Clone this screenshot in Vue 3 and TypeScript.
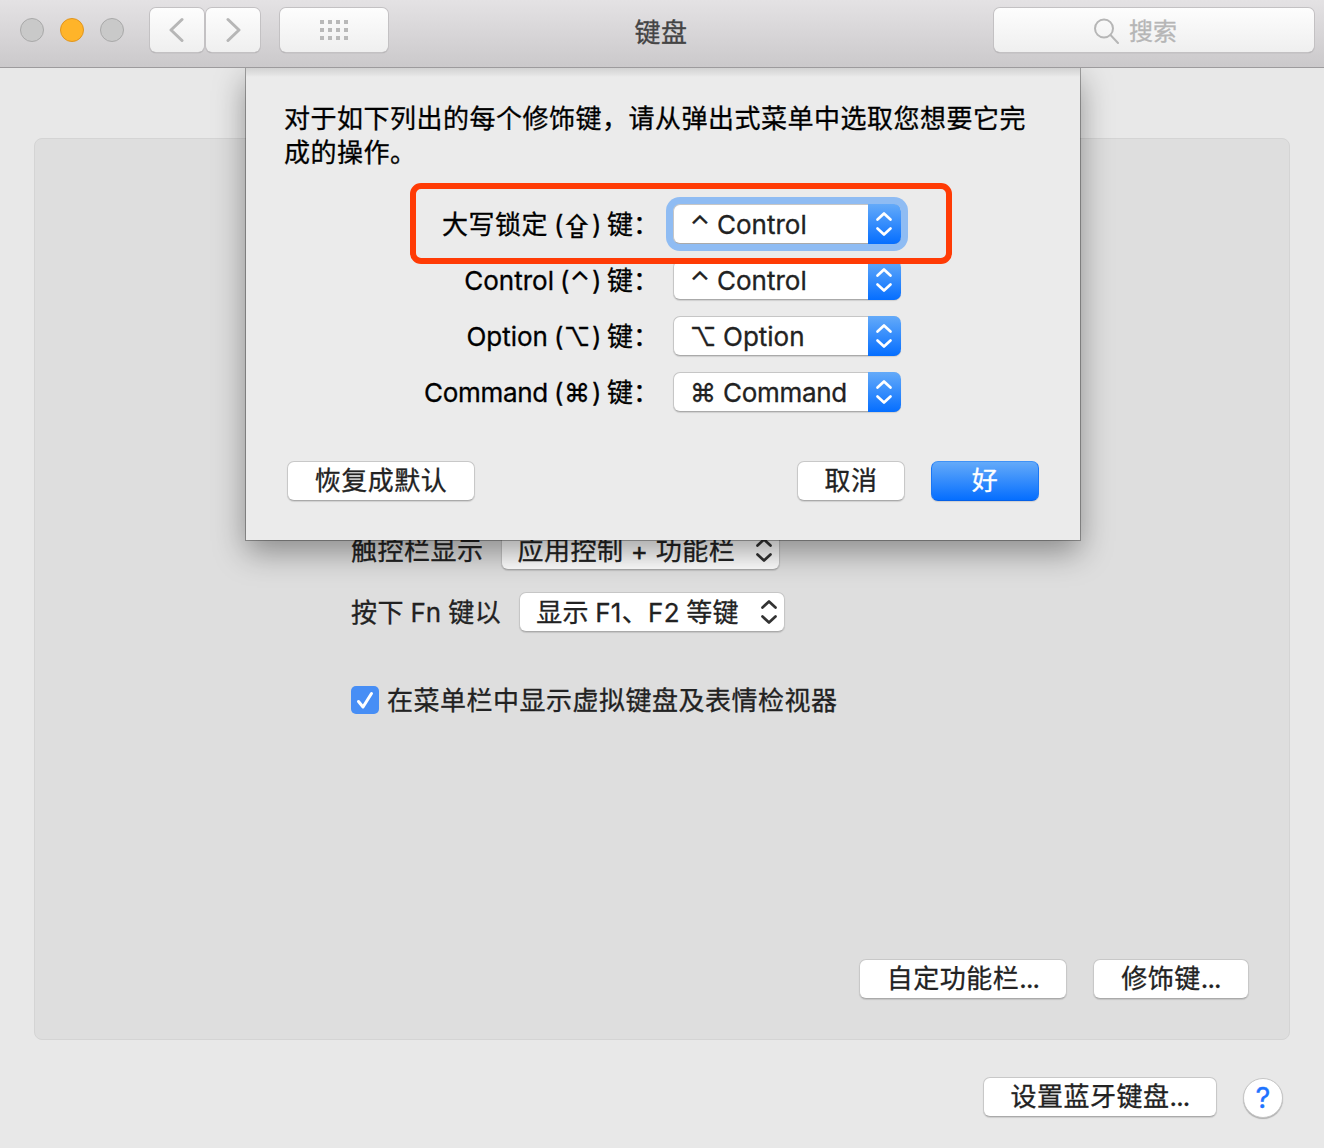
<template>
  <div class="window">
    <header class="toolbar">
      <div class="lights">
        <span class="light"></span>
        <span class="light minimize"></span>
        <span class="light"></span>
      </div>
      <div class="nav">
        <button class="tool nav-button" aria-label="back">
          <svg width="16" height="26" viewBox="0 0 16 26"><path d="M13 2.500 2 13l11 10.500" /></svg>
        </button>
        <button class="tool nav-button" aria-label="forward">
          <svg width="16" height="26" viewBox="0 0 16 26"><path d="M3 2.500 14 13 3 23.500" /></svg>
        </button>
      </div>
      <button class="tool grid-button" aria-label="all">
        <span class="dots"><i v-for="n in 12" :key="n"></i></span>
      </button>
      <h1 class="title">键盘</h1>
      <div class="tool search">
        <svg width="26" height="26" viewBox="0 0 26 26">
          <circle cx="11" cy="10.500" r="9" />
          <path d="M17.500 17l7.500 8" />
        </svg>
        <span>搜索</span>
      </div>
    </header>

    <main class="panel">
      <div class="setting">
        <span class="setting-label">触控栏显示</span>
        <div class="popup plain touchbar">
          <span class="value">应用控制 + 功能栏</span>
          <svg class="arrows" width="18" height="26" viewBox="0 0 18 26"><path d="M2.500 8.500 9 2.500l6.500 6M2.500 17.500l6.500 6 6.500-6" /></svg>
        </div>
      </div>
      <div class="setting">
        <span class="setting-label">按下 Fn 键以</span>
        <div class="popup plain fn">
          <span class="value">显示 F1、F2 等键</span>
          <svg class="arrows" width="18" height="26" viewBox="0 0 18 26"><path d="M2.500 8.500 9 2.500l6.500 6M2.500 17.500l6.500 6 6.500-6" /></svg>
        </div>
      </div>
      <label class="check-row">
        <span class="checkbox">
          <svg width="28" height="28" viewBox="0 0 28 28"><path d="M7.500 15.500 12 21 20.500 7.500" /></svg>
        </span>
        <span class="check-text">在菜单栏中显示虚拟键盘及表情检视器</span>
      </label>
      <div class="panel-actions">
        <button class="button customize">自定功能栏<span class="dots-text">...</span></button>
        <button class="button modifiers">修饰键<span class="dots-text">...</span></button>
      </div>
    </main>

    <footer class="footer">
      <button class="button bluetooth">设置蓝牙键盘<span class="dots-text">...</span></button>
      <button class="help">?</button>
    </footer>

    <section class="sheet">
      <p class="message">对于如下列出的每个修饰键，请从弹出式菜单中选取您想要它完成的操作。</p>
      <div class="rows">
        <div v-for="row in rows" :key="row.name" class="row">
          <div class="key-label">
            <span :class="[row.kind, { latin: row.latin }]">{{ row.name }}</span>
            <span class="paren open">(</span>
            <span class="symbol" :class="row.kind">{{ row.symbol }}</span>
            <span class="paren">)</span>
            <span class="suffix">键<span class="colon">：</span></span>
          </div>
          <div class="popup" :class="{ focused: row.focused }">
            <span class="symbol value-symbol" :class="row.kind === 'caps' ? 'control' : row.kind">{{ row.valueSymbol }}</span>
            <span class="latin value-text" :class="row.kind">{{ row.value }}</span>
            <span class="stepper">
              <svg class="arrows" width="18" height="26" viewBox="0 0 18 26"><path d="M2.500 8.500 9 2.500l6.500 6M2.500 17.500l6.500 6 6.500-6" /></svg>
            </span>
          </div>
        </div>
      </div>
      <div class="sheet-actions">
        <button class="button restore">恢复成默认</button>
        <button class="button cancel">取消</button>
        <button class="button primary">好</button>
      </div>
    </section>
    <div class="highlight"></div>
  </div>
</template>

<script setup lang="ts">
interface ModifierRow {
  name: string
  latin: boolean
  symbol: string
  kind: string
  value: string
  valueSymbol: string
  focused: boolean
}

const rows: ModifierRow[] = [
  { name: '大写锁定', latin: false, symbol: '⇪', kind: 'caps', value: 'Control', valueSymbol: '⌃', focused: true },
  { name: 'Control', latin: true, symbol: '⌃', kind: 'control', value: 'Control', valueSymbol: '⌃', focused: false },
  { name: 'Option', latin: true, symbol: '⌥', kind: 'option', value: 'Option', valueSymbol: '⌥', focused: false },
  { name: 'Command', latin: true, symbol: '⌘', kind: 'command', value: 'Command', valueSymbol: '⌘', focused: false },
]
</script>

<style>
body {
  background: #e8e8e8;
}
</style>

<style scoped>
.window {
  position: relative;
  box-sizing: border-box;
  width: 1324px;
  height: 1148px;
  overflow: hidden;
  background: #e8e8e8;
  color: #222;
  font-family: Inter, 'Noto Sans CJK SC', sans-serif;
  font-size: 26px;
  letter-spacing: 0.5px;
  line-height: 38px;
  white-space: nowrap;
  -webkit-text-stroke: 0.3px;
}

.window *,
.window *::before {
  box-sizing: border-box;
}

button {
  margin: 0;
  padding: 0;
  border: none;
  color: inherit;
  font: inherit;
  letter-spacing: inherit;
}

svg {
  display: block;
  fill: none;
  stroke: currentColor;
  stroke-width: 3;
  stroke-linecap: round;
  stroke-linejoin: round;
}

.arrows {
  stroke-width: 2.7;
}

.toolbar {
  display: flex;
  align-items: flex-start;
  height: 68px;
  padding: 8px 10px 0 20px;
  background: linear-gradient(#e4e2e4, #cbc9cb);
  border-bottom: 1px solid #9d9b9d;
}

.lights {
  display: flex;
  gap: 16px;
  width: 130px;
  padding-top: 10px;
}

.light {
  width: 24px;
  height: 24px;
  border: 1px solid #a9a9a9;
  border-radius: 50%;
  background: #c9c9c9;
}

.light.minimize {
  background: #ffb429;
  border-color: #e0951f;
}

.tool {
  display: flex;
  align-items: center;
  justify-content: center;
  height: 44px;
  border-radius: 6px;
  background: linear-gradient(#fdfdfd, #efefef);
  box-shadow: 0 0 0 1px #c3c1c3, 0 1px 1px 0 #858385;
  color: #b6b6b6;
}

.nav {
  display: flex;
  gap: 2px;
}

.nav-button {
  width: 54px;
}

.grid-button {
  width: 108px;
  margin-left: 20px;
}

.dots {
  display: grid;
  grid-template-columns: repeat(4, 4px);
  gap: 4px;
}

.dots i {
  width: 4px;
  height: 4px;
  background: #b9b9b9;
}

.title {
  width: 546px;
  margin: 6px 0 0;
  color: #444;
  font-size: 26px;
  font-weight: 400;
  text-align: center;
}

.search {
  width: 320px;
  margin-left: auto;
  gap: 10px;
  padding: 2px 137px 0 0;
  font-size: 24px;
  letter-spacing: 0;
  justify-content: flex-end;
}

.search span {
  padding-top: 2px;
}

.search svg {
  stroke-width: 2;
}

.panel {
  display: flex;
  flex-direction: column;
  width: 1256px;
  height: 902px;
  margin: 70px 0 0 34px;
  padding: 391px 40px 40px 316px;
  border: 1px solid #d4d4d4;
  border-radius: 8px;
  background: #dedede;
}

.setting {
  display: flex;
  align-items: center;
  height: 40px;
  margin-bottom: 22px;
}

.setting-label {
  padding-top: 2px;
  word-spacing: -1.2px;
}

.popup {
  display: flex;
  align-items: center;
  width: 228px;
  height: 40px;
  border: 1px solid #c6c6c6;
  border-bottom-color: #aaa;
  border-radius: 7px;
  background: #fff;
  box-shadow: 0 1px 1px rgba(0, 0, 0, 0.12);
}

.popup.plain {
  justify-content: space-between;
  margin-left: 17px;
  padding: 0 6px 0 16px;
}

.value {
  padding-top: 2px;
  word-spacing: -0.6px;
}

.touchbar {
  width: 279px;
}

.popup.fn {
  width: 266px;
  margin-left: 18px;
}

.fn .value {
  letter-spacing: 0.3px;
  word-spacing: -1.2px;
}

.plain .arrows {
  color: #333;
}

.check-row {
  display: flex;
  align-items: center;
  gap: 8px;
  height: 40px;
  margin-top: 26px;
}

.check-text {
  padding-top: 2px;
}

.checkbox {
  width: 28px;
  height: 28px;
  border-radius: 5px;
  background: #478ef5;
  color: #fff;
}

.panel-actions {
  display: flex;
  justify-content: flex-end;
  gap: 26px;
  margin-top: auto;
}

.button {
  height: 40px;
  border: 1px solid #c8c8c8;
  border-bottom-color: #aaa;
  border-radius: 7px;
  background: #fff;
  box-shadow: 0 1px 1px rgba(0, 0, 0, 0.12);
  text-align: center;
}

.dots-text {
  letter-spacing: -0.8px;
}

.customize {
  width: 208px;
}

.modifiers {
  width: 156px;
}

.footer {
  display: flex;
  justify-content: flex-end;
  gap: 26px;
  padding: 37px 41px 0 0;
}

.bluetooth {
  width: 234px;
}

.help {
  width: 40px;
  height: 40px;
  margin-top: 1px;
  border: 1px solid #c6c6c6;
  border-radius: 50%;
  background: #fff;
  box-shadow: 0 1px 1px rgba(0, 0, 0, 0.25);
  color: #1e73ff;
  font-size: 29px;
  letter-spacing: 0;
}

.sheet {
  position: absolute;
  top: 68px;
  left: 246px;
  width: 834px;
  height: 472px;
  padding: 34px 41px 0;
  background: linear-gradient(#d2d2d2, #e4e4e4 7px, #ebebeb 9px);
  box-shadow: 0 0 0 1px rgba(0, 0, 0, 0.3), 0 12px 30px rgba(0, 0, 0, 0.38);
  clip-path: inset(0 -60px -80px -60px);
  color: #000;
}

.message {
  width: 750px;
  height: 68px;
  margin: 0 0 0 -3px;
  line-height: 34px;
  white-space: normal;
  word-break: break-all;
}

.rows {
  display: flex;
  flex-direction: column;
  gap: 16px;
  margin-top: 34px;
}

.row {
  display: flex;
  align-items: center;
  gap: 13px;
}

.key-label {
  display: flex;
  align-items: center;
  justify-content: flex-end;
  width: 373px;
  padding-top: 2px;
}

.latin {
  letter-spacing: 0;
}

.latin.command {
  letter-spacing: -0.3px;
}

.paren {
  width: 9px;
  letter-spacing: 0;
}

.open {
  width: 10px;
  margin-left: 6px;
}

.suffix {
  margin-left: 6px;
}

.colon {
  margin: 0 0.5px 0 -0.5px;
}

.symbol {
  width: 28px;
  letter-spacing: 0;
  text-align: center;
}

.symbol.control {
  width: 22px;
}

.key-label .symbol {
  margin: 0 1px 0 -1px;
}

.rows .popup {
  color: #222;
  padding-left: 15px;
  border-right: none;
}

.value-symbol {
  margin-right: 6px;
  padding-top: 2px;
}

.value-text {
  padding-top: 2px;
}

.popup.focused {
  box-shadow: 0 0 0 7px #8fbcf3;
}

.stepper {
  display: flex;
  align-items: center;
  justify-content: center;
  width: 33px;
  height: 40px;
  margin-left: auto;
  padding-right: 1px;
  border-radius: 0 7px 7px 0;
  background: linear-gradient(#64aaf9, #056eff);
  color: #fff;
}

.sheet-actions {
  display: flex;
  margin-top: 49px;
}

.restore {
  width: 188px;
}

.cancel {
  width: 108px;
  margin-left: auto;
  margin-right: 26px;
}

.restore,
.cancel {
  color: #222;
}

.primary {
  width: 108px;
  border-color: #3f92f6 #1a77f5 #0560e6;
  background: linear-gradient(#64aaf9, #056eff);
  color: #fff;
}

/* annotation frame around the caps lock row */
.highlight {
  position: absolute;
  top: 183px;
  left: 410px;
  width: 542px;
  height: 81px;
  border: 6px solid #ff3b05;
  border-radius: 11px;
}
</style>
